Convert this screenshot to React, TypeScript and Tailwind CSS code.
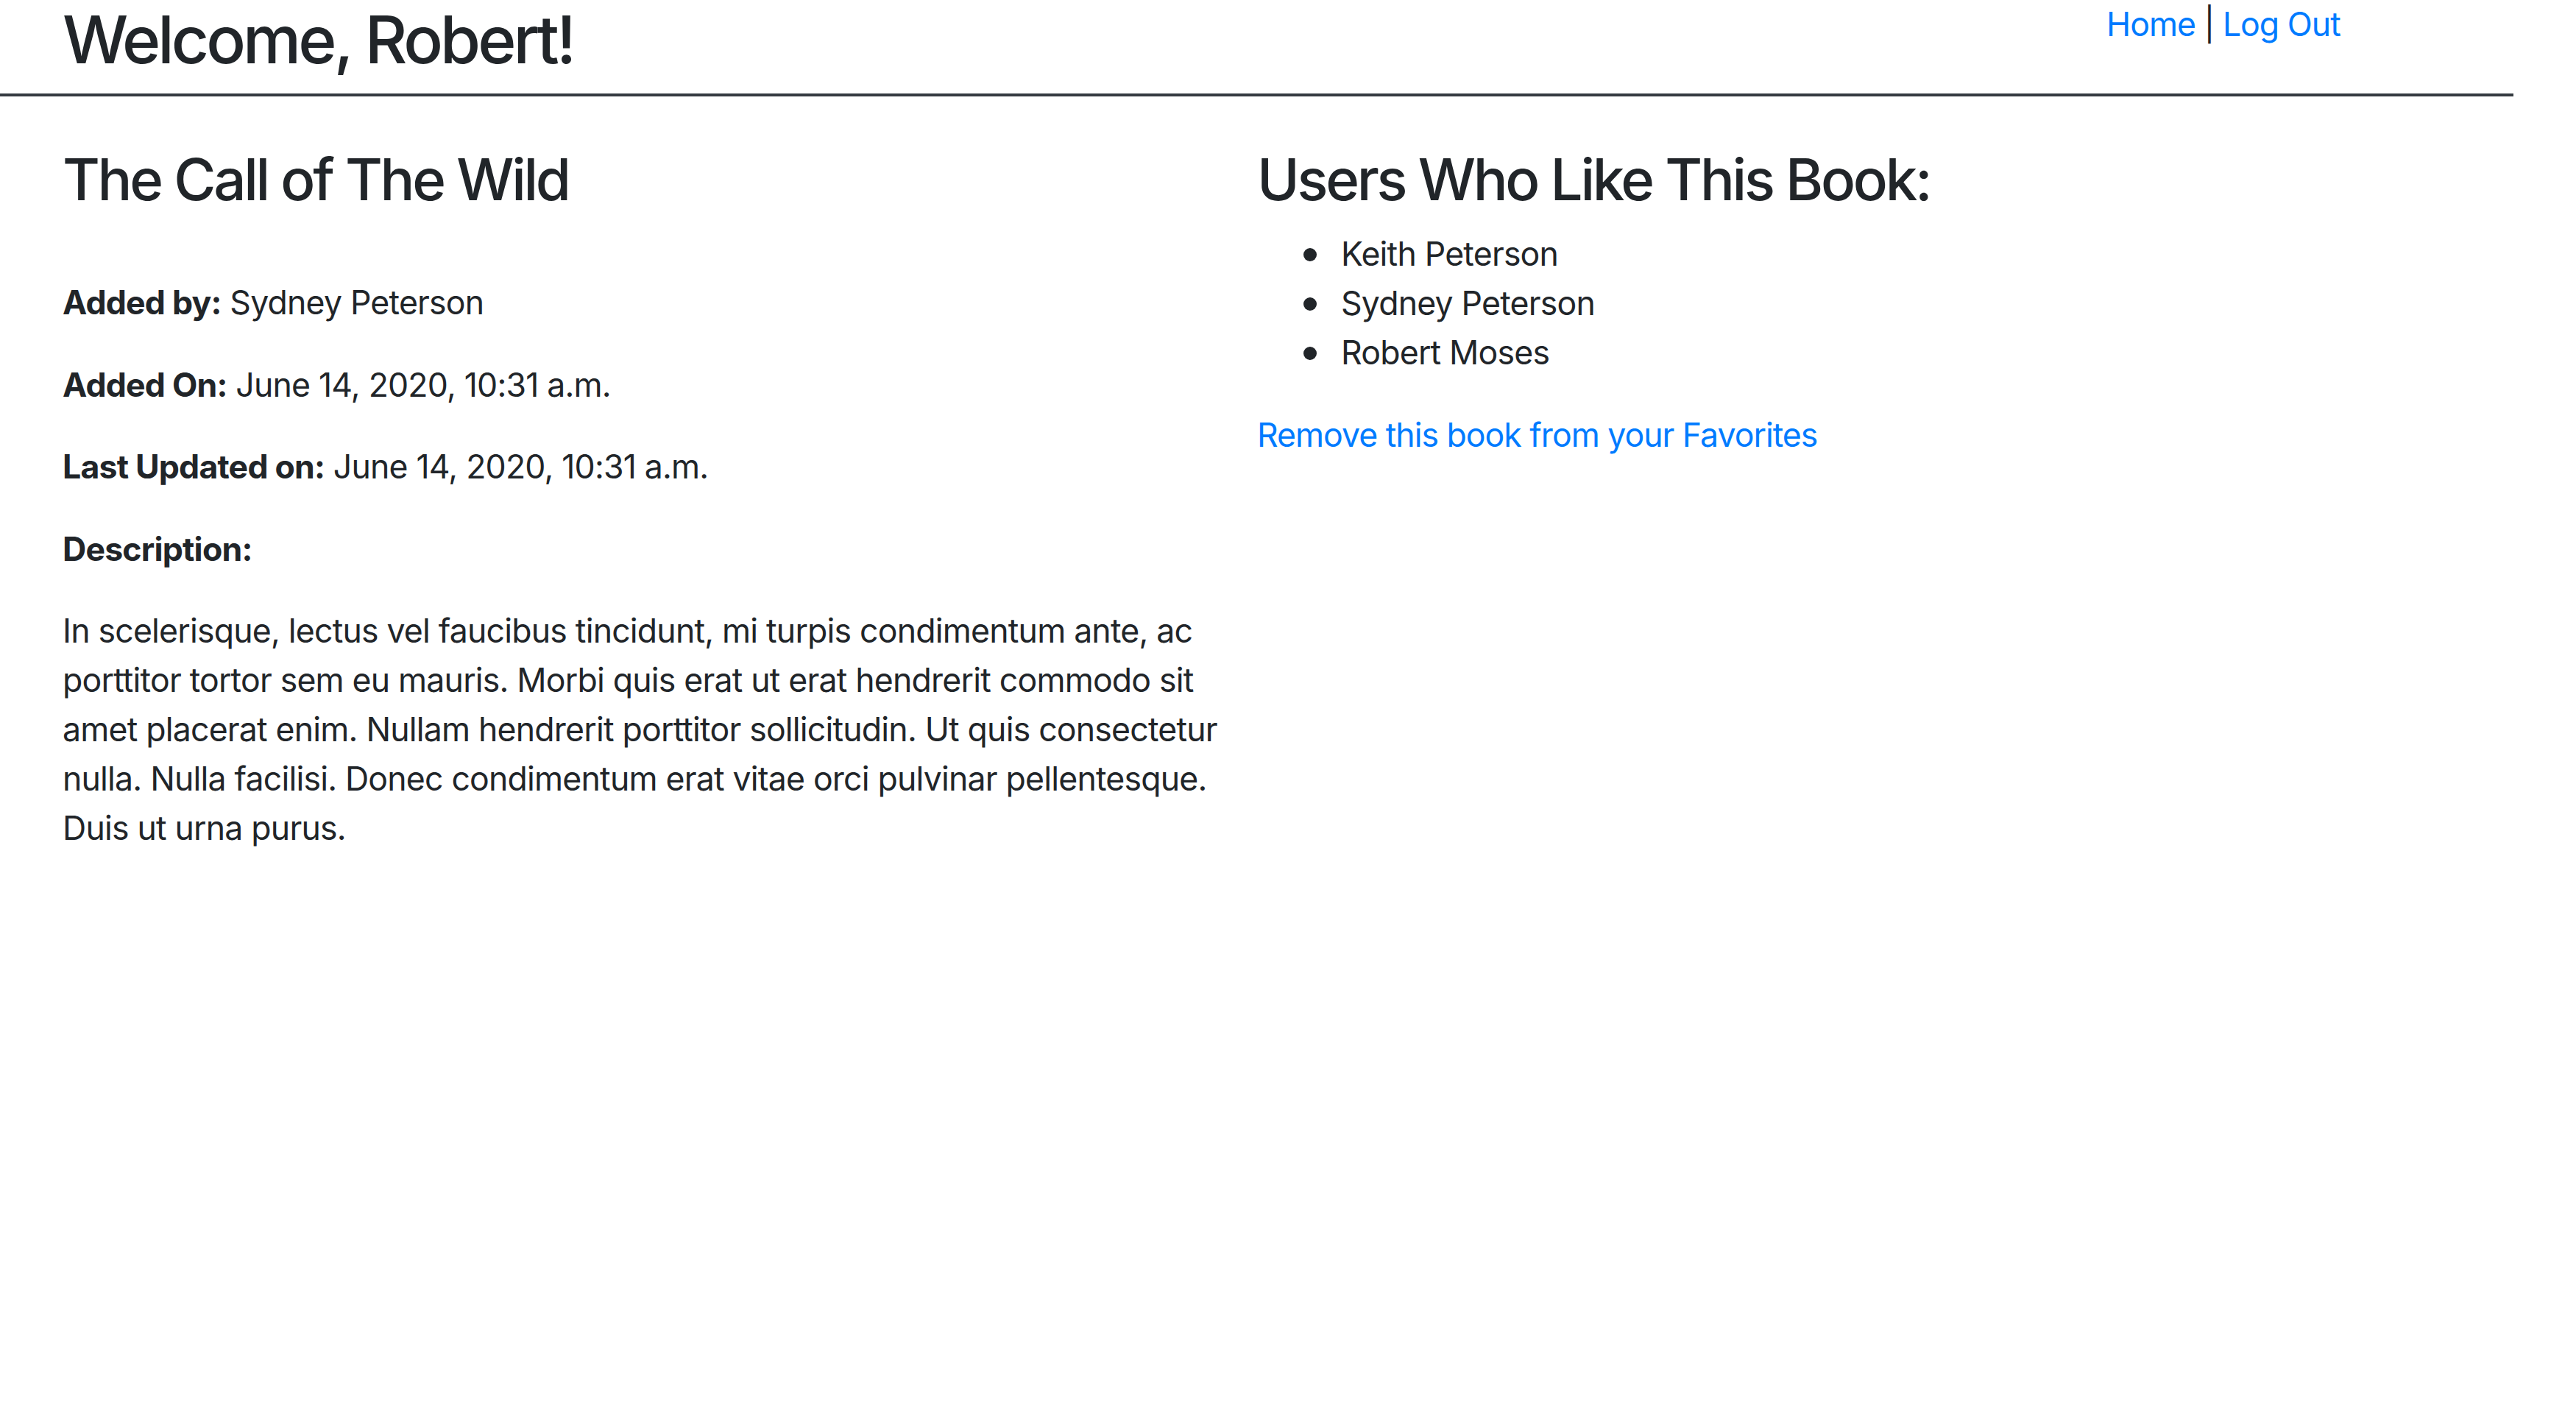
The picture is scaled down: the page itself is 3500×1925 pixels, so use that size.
import React from 'react'

const LIKERS = ['Keith Peterson', 'Sydney Peterson', 'Robert Moses']

const DESCRIPTION =
  'In scelerisque, lectus vel faucibus tincidunt, mi turpis condimentum ante, ac porttitor tortor sem eu mauris. Morbi quis erat ut erat hendrerit commodo sit amet placerat enim. Nullam hendrerit porttitor sollicitudin. Ut quis consectetur nulla. Nulla facilisi. Donec condimentum erat vitae orci pulvinar pellentesque. Duis ut urna purus.'

function Header() {
  return (
    <header className="flex w-[3415px] items-start border-b-4 border-[#343a40] pb-[20px]">
      <h1 className="flex-1 pl-[85px] text-[89px] font-medium leading-[107px] tracking-[-3.9px]">
        Welcome, Robert!
      </h1>
      <nav className="w-[553px] text-[44.6px] leading-[67px] tracking-[-1px]">
        <a href="#" className="text-[#007bff]">Home</a>
        <span> | </span>
        <a href="#" className="text-[#007bff]">Log Out</a>
      </nav>
    </header>
  )
}

function Field({ label, value }: { label: string; value?: string }) {
  return (
    <p className="mb-[44.6px]">
      <strong className="font-bold">{label}</strong>
      {value && <> {value}</>}
    </p>
  )
}

export default function App() {
  return (
    <div className="min-h-screen bg-white font-['Inter','Liberation_Sans',sans-serif] text-[#212529]">
      <Header />

      <main className="flex pl-[85px] pt-[66px] text-[44.6px] leading-[67px] tracking-[-0.8px]">
        {/* Book details */}
        <section className="w-[1623px] shrink-0 pr-[33px]">
          <h2 className="mb-[87px] text-[78px] font-medium leading-[94px] tracking-[-3.3px]">
            The Call of The Wild
          </h2>
          <Field label="Added by:" value="Sydney Peterson" />
          <Field label="Added On:" value="June 14, 2020, 10:31 a.m." />
          <Field label="Last Updated on:" value="June 14, 2020, 10:31 a.m." />
          <Field label="Description:" />
          <p className="mb-[44.6px]">{DESCRIPTION}</p>
        </section>

        {/* Favorites */}
        <section className="flex-1">
          <h2 className="mb-[21px] text-[78px] font-medium leading-[94px] tracking-[-3.3px]">
            Users Who Like This Book:
          </h2>
          <ul className="mb-[45px] pl-[63px]">
            {LIKERS.map((name) => (
              <li key={name} className="flex items-center gap-[33px]">
                <span className="h-[18px] w-[18px] shrink-0 rounded-full bg-[#212529]" />
                <span>{name}</span>
              </li>
            ))}
          </ul>
          <a href="#" className="tracking-[-1px] text-[#007bff]">
            Remove this book from your Favorites
          </a>
        </section>
      </main>
    </div>
  )
}
